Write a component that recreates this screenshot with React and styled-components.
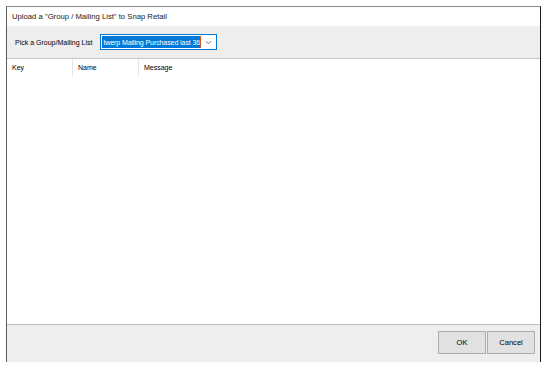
import React from 'react'
import styled, { createGlobalStyle } from 'styled-components'

const Global = createGlobalStyle`
	html, body {
		margin: 0;
		padding: 0;
		background: #ffffff;
	}
	body {
		font-family: "Liberation Sans", Arial, sans-serif;
		color: #000;
	}
`

const Page = styled.div`
	padding: 6px 7px 7px 6px;
`

const Window = styled.div`
	width: 535px;
	height: 356px;
	box-sizing: border-box;
	display: flex;
	flex-direction: column;
	border-top: 1px solid #8a8a8a;
	border-left: 1px solid #5a5a5a;
	border-right: 1px solid #1a1a1a;
	background: #fff;
`

const TitleBar = styled.div`
	height: 19px;
	display: flex;
	align-items: center;
	padding-left: 5px;
	font-size: 7.7px;
	color: #1a1a1a;
`

const Toolbar = styled.div`
	height: 32px;
	background: #eeeeee;
	border-bottom: 1px solid #c4c4c4;
	display: flex;
	align-items: center;
	padding-left: 8px;
	gap: 8px;
	font-size: 7px;
`

const Select = styled.div`
	width: 117px;
	height: 16px;
	box-sizing: border-box;
	border: 1px solid #0078d7;
	background: #fff;
	display: flex;
	align-items: center;
	padding: 1px;
`

const SelectValue = styled.span`
	flex: 1;
	height: 100%;
	background: #0078d7;
	color: #fff;
	display: flex;
	align-items: center;
	white-space: nowrap;
	overflow: hidden;
	font-size: 7px;
	letter-spacing: -0.08px;
	padding-left: 1px;
	margin-right: 3px;
	border-right: 1px solid #d05a1a;
`

const Chevron = styled.svg`
	width: 9px;
	height: 9px;
	margin-right: 2px;
`

const List = styled.div`
	flex: 1;
	display: flex;
	flex-direction: column;
	background: #fff;
`

const HeaderRow = styled.div`
	display: flex;
	height: 17px;
	font-size: 7px;
`

const HeaderCell = styled.div`
	width: ${p => p.$w}px;
	box-sizing: border-box;
	padding-left: 5px;
	display: flex;
	align-items: center;
	border-right: ${p => (p.$last ? 'none' : '1px solid #e5e5e5')};
`

const Footer = styled.div`
	height: 38px;
	box-sizing: border-box;
	background: #eeeeee;
	border-top: 1px solid #bdbdbd;
	display: flex;
	justify-content: flex-end;
	align-items: flex-start;
	padding: 6px 5px 0 0;
	gap: 1px;
`

const Button = styled.button`
	width: 48px;
	height: 23px;
	background: #e1e1e1;
	border: 1px solid #adadad;
	font-family: "Liberation Sans", Arial, sans-serif;
	font-size: 7.6px;
	color: #000;
	padding: 0;
`

export default function App() {
	return (
		<>
			<Global />
			<Page>
				<Window>
					<TitleBar>Upload a "Group / Mailing List" to Snap Retail</TitleBar>
					<Toolbar>
						<span>Pick a Group/Mailing List</span>
						<Select>
							<SelectValue>twerp Mailing Purchased last 365</SelectValue>
							<Chevron viewBox="0 0 10 10">
								<path d="M2 3.5 L5 6.5 L8 3.5" fill="none" stroke="#555" strokeWidth="0.9" />
							</Chevron>
						</Select>
					</Toolbar>
					<List>
						<HeaderRow>
							<HeaderCell $w={66}>Key</HeaderCell>
							<HeaderCell $w={66}>Name</HeaderCell>
							<HeaderCell $w={120} $last>Message</HeaderCell>
						</HeaderRow>
					</List>
					<Footer>
						<Button>OK</Button>
						<Button>Cancel</Button>
					</Footer>
				</Window>
			</Page>
		</>
	)
}
